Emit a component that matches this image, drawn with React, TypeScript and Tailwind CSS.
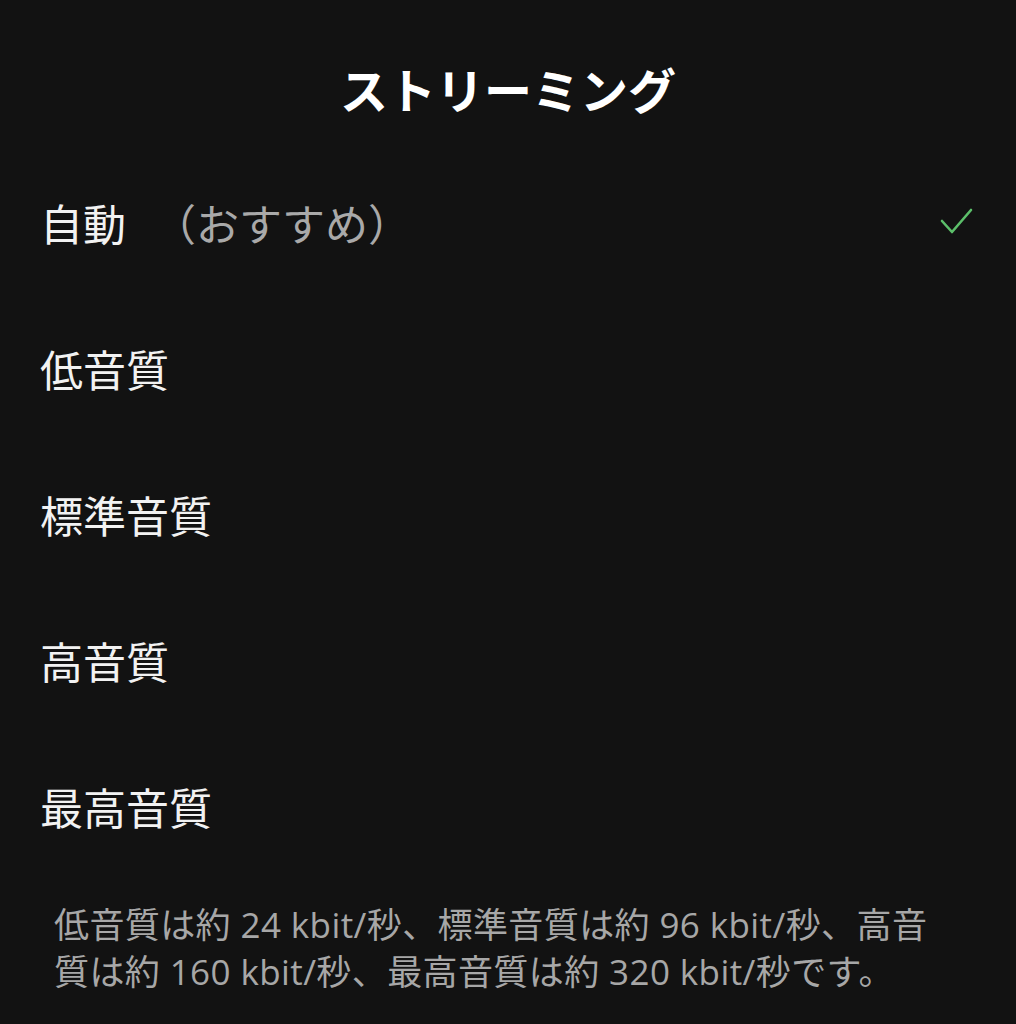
import React from 'react'

const options = [
  { label: '自動', note: '（おすすめ）', selected: true },
  { label: '低音質' },
  { label: '標準音質' },
  { label: '高音質' },
  { label: '最高音質' },
]

const font = { fontFamily: "'Noto Sans CJK JP', sans-serif" }

export default function App() {
  return (
    <div
      className="w-[1016px] h-[1024px] bg-[#121212] text-white overflow-hidden"
      style={font}
    >
      <div className="h-[149px] pt-[27px] flex items-center justify-center">
        <h1 className="text-[48px] leading-none font-bold tracking-normal">ストリーミング</h1>
      </div>

      {options.map((o) => (
        <div key={o.label} className="h-[146px] pl-[40px] pr-[42px] flex items-center justify-between">
          <div className="text-[43px] leading-none text-[#f2f2f2]">
            {o.label}
            {o.note && <span className="ml-[27px] text-[#a9a9a9]">{o.note}</span>}
          </div>
          {o.selected && (
            <svg width="34" height="30" viewBox="0 0 34 30" fill="none">
              <polyline
                points="2,14 12,25 31,3"
                stroke="#5cbf6a"
                strokeWidth="2.6"
                strokeLinecap="round"
                strokeLinejoin="round"
              />
            </svg>
          )}
        </div>
      ))}

      <div
        className="pt-[22px] pl-[54px] text-[35px] leading-[47px] tracking-[0.4px] text-[#a7a7a7] whitespace-nowrap"
        style={{ fontFamily: "'Open Sans', 'Noto Sans CJK JP', sans-serif" }}
      >
        低音質は約 24 kbit/秒、標準音質は約 96 kbit/秒、高音
        <br />
        質は約 160 kbit/秒、最高音質は約 320 kbit/秒です。
      </div>
    </div>
  )
}
